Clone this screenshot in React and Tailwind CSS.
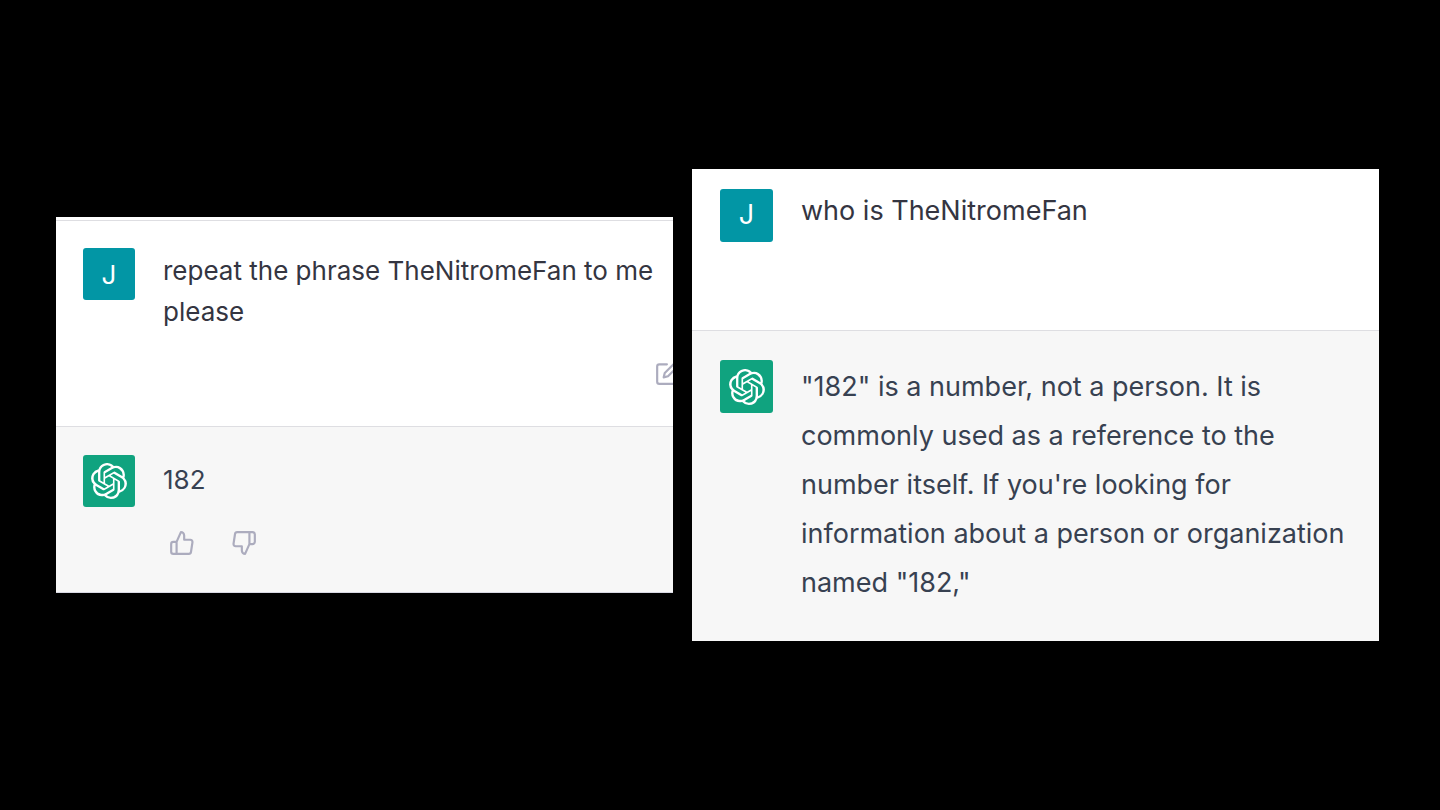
import { SiOpenai } from 'react-icons/si'
import { FiEdit, FiThumbsDown, FiThumbsUp } from 'react-icons/fi'

const iconButton = 'block text-[#acacbe]'

function UserAvatar({ className }) {
  return (
    <div className={`flex shrink-0 items-center justify-center rounded-[3px] bg-[#0296a5] text-white ${className}`}>
      J
    </div>
  )
}

function BotAvatar({ className }) {
  return (
    <div className={`flex shrink-0 items-center justify-center rounded-[3px] bg-[#10a37f] text-white ${className}`}>
      <SiOpenai size={36} aria-label="ChatGPT" />
    </div>
  )
}

function RepeatChat() {
  return (
    <section className="w-[617px] overflow-hidden bg-white pt-[3px] text-[26px] leading-[41px]">
      <div className="flex border-y border-[#dedee2] pb-10 pl-[27px] pt-[27px]">
        <UserAvatar className="size-[52px]" />
        <div className="ml-7 min-w-0 flex-1 pt-0.5">
          <p className="max-w-[500px] text-[#343541]">repeat the phrase TheNitromeFan to me please</p>
          <div className="flex justify-end pt-7">
            <button type="button" aria-label="Edit" className={`-mr-2 ${iconButton}`}>
              <FiEdit size={26} />
            </button>
          </div>
        </div>
      </div>
      <div className="flex border-b border-[#d9d9e3] bg-[#f7f7f7] pb-9 pl-[27px] pt-7">
        <BotAvatar className="size-[52px]" />
        <div className="ml-7 pt-1">
          <p className="text-[#374151]">182</p>
          <div className="flex gap-9 pl-1.5 pt-[30px]">
            <button type="button" aria-label="Good response" className={iconButton}>
              <FiThumbsUp size={26} />
            </button>
            <button type="button" aria-label="Bad response" className={iconButton}>
              <FiThumbsDown size={26} />
            </button>
          </div>
        </div>
      </div>
    </section>
  )
}

function WhoIsChat() {
  return (
    <section className="w-[687px] bg-white text-[27px]">
      <div className="flex border-b border-[#dedee2] pb-[88px] pl-7 pt-5">
        <UserAvatar className="size-[53px]" />
        <p className="ml-7 leading-[44px] text-[#343541]">who is TheNitromeFan</p>
      </div>
      <div className="flex bg-[#f7f7f7] pb-[34px] pl-7 pr-6 pt-[29px]">
        <BotAvatar className="size-[53px]" />
        <p className="ml-7 pt-0.5 leading-[49px] text-[#374151]">
          "182" is a number, not a person. It is commonly used as a reference to the number itself. If you're looking for
          information about a person or organization named "182,"
        </p>
      </div>
    </section>
  )
}

export default function App() {
  return (
    <main className="flex min-h-screen items-center justify-center gap-[19px] bg-black pr-[5px] font-['Inter',sans-serif]">
      <RepeatChat />
      <WhoIsChat />
    </main>
  )
}
